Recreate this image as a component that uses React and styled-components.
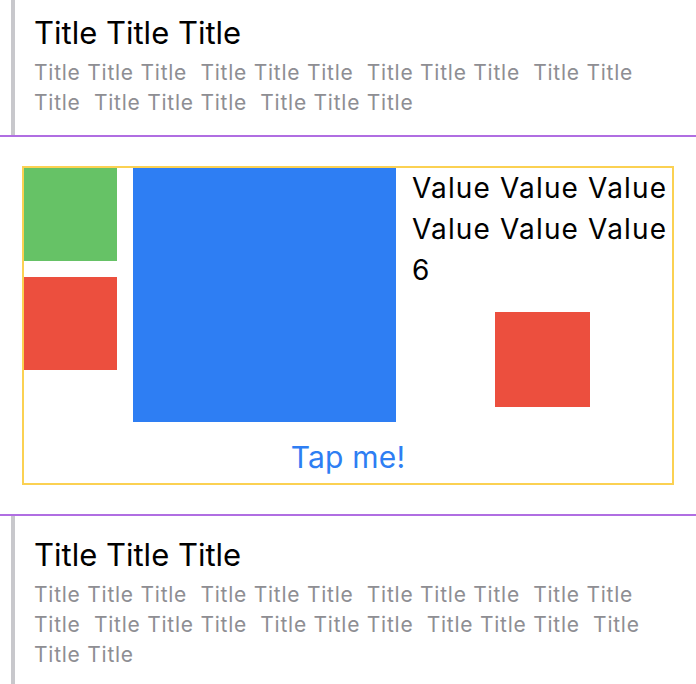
import React from "react";
import styled, { createGlobalStyle } from "styled-components";

const Global = createGlobalStyle`
  html, body { margin: 0; padding: 0; background: #ffffff; }
  body { font-family: Inter, "Noto Sans", "Liberation Sans", sans-serif; overflow: hidden; }
`;

const Page = styled.div`
  width: 696px;
  margin-top: -6px;
  display: flex;
  flex-direction: column;
`;

const Cell = styled.section`
  display: flex;
  padding-left: 11px;
`;

const Bar = styled.div`
  width: 4px;
  flex-shrink: 0;
  background: #c8c8cc;
`;

const CellBody = styled.div`
  flex: 1;
  padding: 20px 22px 17px 19px;
  display: flex;
  flex-direction: column;
`;

const Title = styled.div`
  font-size: 31px;
  line-height: 37px;
  color: #000000;
  margin-bottom: 7px;
`;

const Subtitle = styled.div`
  font-size: 21px;
  line-height: 30px;
  letter-spacing: 0.75px;
  color: #8e8e93;
  white-space: pre-wrap;
`;

const Separator = styled.div`
  height: 2px;
  background: #b06ee2;
`;

const Middle = styled.section`
  padding: 29px 22px;
`;

const Card = styled.div`
  border: 2px solid #fbd152;
  display: flex;
  flex-direction: column;
`;

const Row = styled.div`
  display: flex;
  gap: 16px;
  height: 254px;
`;

const SmallColumn = styled.div`
  display: flex;
  flex-direction: column;
  gap: 16px;
  width: 93px;
  flex-shrink: 0;
`;

const Square = styled.div`
  width: ${(p) => p.$size}px;
  height: ${(p) => p.$size}px;
  background: ${(p) => p.$color};
  flex-shrink: 0;
`;

const BlueBlock = styled.div`
  width: 263px;
  height: 254px;
  background: #2e7ef3;
  flex-shrink: 0;
`;

const ValueColumn = styled.div`
  flex: 1;
  display: flex;
  flex-direction: column;
  min-width: 0;
`;

const ValueText = styled.div`
  font-size: 28px;
  line-height: 41px;
  letter-spacing: 1.15px;
  color: #000000;
`;

const SquareSlot = styled.div`
  flex: 1;
  display: flex;
  align-items: center;
  justify-content: center;
  padding-top: 6px;
`;

const TapButton = styled.button`
  appearance: none;
  border: none;
  background: transparent;
  font-family: inherit;
  font-size: 30px;
  line-height: 51px;
  letter-spacing: 0.2px;
  color: #2e7ef3;
  padding: 10px 0 0;
  text-align: center;
  cursor: pointer;
`;

const subTop =
  "Title Title Title  Title Title Title  Title Title Title  Title Title Title  Title Title Title  Title Title Title";
const subBottom =
  "Title Title Title  Title Title Title  Title Title Title  Title Title Title  Title Title Title  Title Title Title  Title Title Title  Title Title Title";

function InfoCell({ title, subtitle }) {
  return (
    <Cell>
      <Bar />
      <CellBody>
        <Title>{title}</Title>
        <Subtitle>{subtitle}</Subtitle>
      </CellBody>
    </Cell>
  );
}

export default function App() {
  return (
    <>
      <Global />
      <Page>
        <InfoCell title="Title Title Title" subtitle={subTop} />
        <Separator />
        <Middle>
          <Card>
            <Row>
              <SmallColumn>
                <Square $size={93} $color="#66c266" />
                <Square $size={93} $color="#ec4f3e" />
              </SmallColumn>
              <BlueBlock />
              <ValueColumn>
                <ValueText>Value Value Value Value Value Value 6</ValueText>
                <SquareSlot>
                  <Square $size={95} $color="#ec4f3e" />
                </SquareSlot>
              </ValueColumn>
            </Row>
            <TapButton>Tap me!</TapButton>
          </Card>
        </Middle>
        <Separator />
        <InfoCell title="Title Title Title" subtitle={subBottom} />
      </Page>
    </>
  );
}
